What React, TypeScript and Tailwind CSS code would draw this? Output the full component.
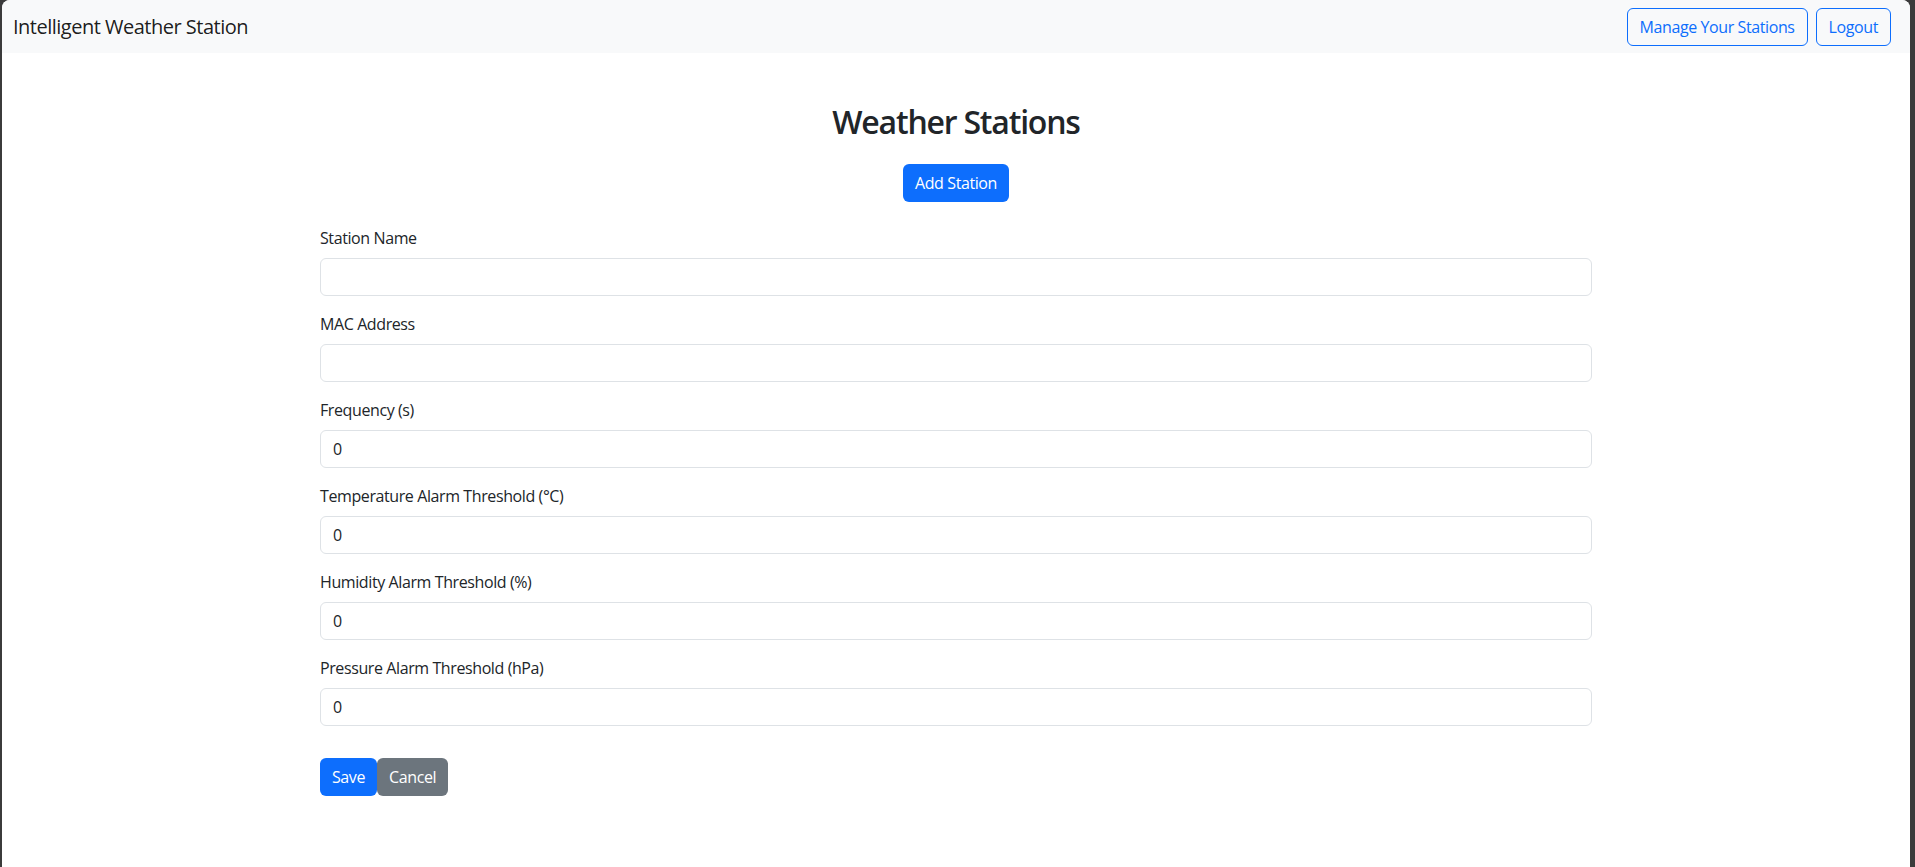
import React from 'react';

const fields = [
  { label: 'Station Name', value: '' },
  { label: 'MAC Address', value: '' },
  { label: 'Frequency (s)', value: '0' },
  { label: 'Temperature Alarm Threshold (°C)', value: '0' },
  { label: 'Humidity Alarm Threshold (%)', value: '0' },
  { label: 'Pressure Alarm Threshold (hPa)', value: '0' },
];

const App: React.FC = () => {
  return (
    <div className="h-[867px] w-full bg-[#3b3b3b] overflow-hidden tracking-[-0.4px]" style={{ fontFamily: '"Open Sans", "Noto Sans", sans-serif' }}>
      <div className="ml-[2px] mr-[5px] h-full rounded-t-[8px] bg-white overflow-hidden">
        {/* Navbar */}
        <nav className="h-[53px] bg-[#f8f9fa] flex items-center justify-between pl-[11px] pr-[19px]">
          <span className="text-[20px] text-black/90 tracking-[-0.5px]">Intelligent Weather Station</span>
          <div className="flex gap-2">
            <button className="h-[38px] px-3 rounded-md border border-[#0d6efd] text-[#0d6efd] text-[16px]">Manage Your Stations</button>
            <button className="h-[38px] px-3 rounded-md border border-[#0d6efd] text-[#0d6efd] text-[16px]">Logout</button>
          </div>
        </nav>

        {/* Content */}
        <div className="w-[1272px] mx-auto pt-[50px] text-[#212529]">
          <h2 className="text-[32px] font-semibold leading-[38px] text-center tracking-[-1.2px]">Weather Stations</h2>
          <div className="flex justify-center mt-[23px]">
            <button className="h-[38px] px-3 rounded-md bg-[#0d6efd] text-white text-[16px]">Add Station</button>
          </div>

          <form className="mt-[24px]">
            {fields.map((f) => (
              <div key={f.label} className="mb-4">
                <label className="block text-[16px] leading-6 mb-2">{f.label}</label>
                <input
                  type="text"
                  defaultValue={f.value}
                  className="block w-full h-[38px] px-3 rounded-md border border-[#dee2e6] text-[16px] text-[#212529] outline-none"
                />
              </div>
            ))}
            <div className="flex mt-8">
              <button type="button" className="h-[38px] px-3 rounded-md bg-[#0d6efd] text-white text-[16px]">Save</button>
              <button type="button" className="h-[38px] px-3 rounded-md bg-[#6c757d] text-white text-[16px]">Cancel</button>
            </div>
          </form>
        </div>
      </div>
    </div>
  );
};

export default App;
